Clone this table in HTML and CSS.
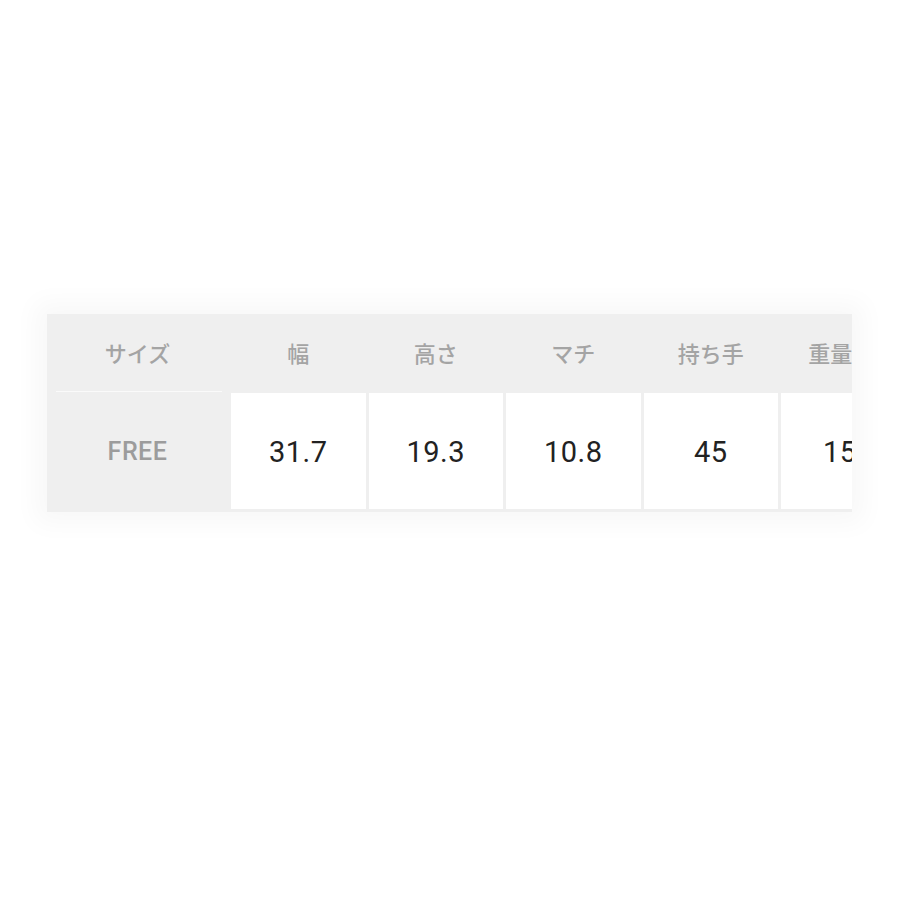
FILE: index.html
```html
<!DOCTYPE html>
<html lang="ja">
<head>
    <meta charset="UTF-8">
    <meta name="viewport" content="width=device-width, initial-scale=1.0">
    <title>サイズ表</title>
    <link rel="stylesheet" href="styles.css">
</head>
<body>
    <div class="page">
        <div class="size-table-wrap">
            <div class="size-table">
                <div class="cell head label">サイズ</div>
                <div class="cell head">幅</div>
                <div class="cell head">高さ</div>
                <div class="cell head">マチ</div>
                <div class="cell head">持ち手</div>
                <div class="cell head last">重量</div>

                <div class="cell label free">FREE</div>
                <div class="cell value">31.7</div>
                <div class="cell value">19.3</div>
                <div class="cell value">10.8</div>
                <div class="cell value">45</div>
                <div class="cell value">150</div>
            </div>
        </div>
    </div>
</body>
</html>
```

FILE: styles.css
```css
body {
    margin: 0;
    background: #ffffff;
    font-family: "Noto Sans CJK JP", sans-serif;
}
.page {
    width: 900px;
    height: 900px;
    padding-top: 314px;
    box-sizing: border-box;
}
.size-table-wrap {
    margin-left: 47px;
    width: 805px;
    overflow: hidden;
    background: #efefef;
    box-shadow: 0 0 24px 12px #f8f8f8;
}
.size-table {
    display: grid;
    grid-template-columns: 181px repeat(5, 134.5px);
    grid-template-rows: 77px 116px;
    column-gap: 3px;
    row-gap: 2px;
    padding-bottom: 3px;
    width: max-content;
}
.cell {
    display: flex;
    align-items: center;
    justify-content: center;
}
.head {
    font-size: 22px;
    font-weight: 500;
    color: #a4a4a4;
    padding-bottom: 2px;
}
.head.last {
    padding-right: 36px;
}
.label {
    background: #efefef;
}
.free {
    position: relative;
    font-family: Roboto, "Noto Sans", sans-serif;
    font-weight: 500;
    font-size: 25px;
    letter-spacing: 0.5px;
    color: #9c9c9c;
}
.free::before {
    content: "";
    position: absolute;
    top: -2px;
    left: 9px;
    right: 6px;
    height: 1px;
    background: #fafafa;
}
.value {
    background: #ffffff;
    font-family: Roboto, "Noto Sans", sans-serif;
    font-size: 29px;
    letter-spacing: 0.5px;
    color: #222222;
    padding-top: 2px;
}
```
